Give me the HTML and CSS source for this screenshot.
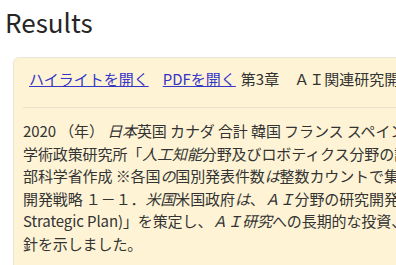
FILE: index.html
```html
<!DOCTYPE html>
<html lang="ja">
<head>
<meta charset="utf-8">
<title>Results</title>
<link rel="stylesheet" href="styles.css">
</head>
<body>
<main class="page">
  <h1 class="title">Results</h1>
  <section class="result">
    <div class="result-head">
      <a class="link link-highlight" href="#">ハイライトを開く</a>
      <a class="link link-pdf" href="#">PDFを開く</a>
      <span class="doc">第3章　ＡＩ関連研究開発の動向</span>
    </div>
    <p class="snippet">2020 （年） <em>日本</em>英国 カナダ 合計 韓国 フランス スペイン ドイツ 中国 米国<br>学術政策研究所「<em>人工知能</em>分野及びロボティクス分野の論文分析」<br>部科学省作成 ※各国<em>の</em>国別発表件数<em>は</em>整数カウントで集計<br>開発戦略 １－１．<em>米国</em>米国政府<em>は</em>、<em>ＡＩ</em>分野の研究開発戦略<br>Strategic Plan)」を策定し、<em>ＡＩ研究</em>への長期的な投資、人材<br>針を示しました。</p>
  </section>
</main>
</body>
</html>
```
FILE: styles.css
```css
html, body {
  margin: 0;
  padding: 0;
  background: #ffffff;
  overflow: hidden;
}
body {
  font-family: "Noto Sans CJK JP", "Noto Sans", sans-serif;
  color: #333333;
}
.page {
  padding: 0 0 0 4px;
  width: 700px;
}
.title {
  margin: 0;
  padding: 3px 0 0 1px;
  font-size: 26px;
  font-weight: 400;
  line-height: 38px;
  color: #262626;
}
.result {
  margin: 16px 0 0 9px;
  background: #fef4d5;
  border: 1px solid #ebe6d6;
  border-radius: 6px;
  padding: 0 0 20px 9px;
}
.result-head {
  display: flex;
  align-items: center;
  padding: 10px 0 17px 6px;
  border-bottom: 1px solid #e8e1cc;
  font-size: 15px;
  line-height: 22px;
}
.link {
  color: #3535c8;
  text-decoration: underline;
}
.link-highlight {
  margin-right: 14px;
}
.link-pdf {
  margin-right: 5px;
}
.doc {
  color: #333333;
  white-space: nowrap;
}
.snippet {
  margin: 12px 0 0;
  font-size: 15px;
  line-height: 22.5px;
  letter-spacing: -0.1px;
  white-space: nowrap;
}
.snippet em {
  font-style: italic;
}
```
